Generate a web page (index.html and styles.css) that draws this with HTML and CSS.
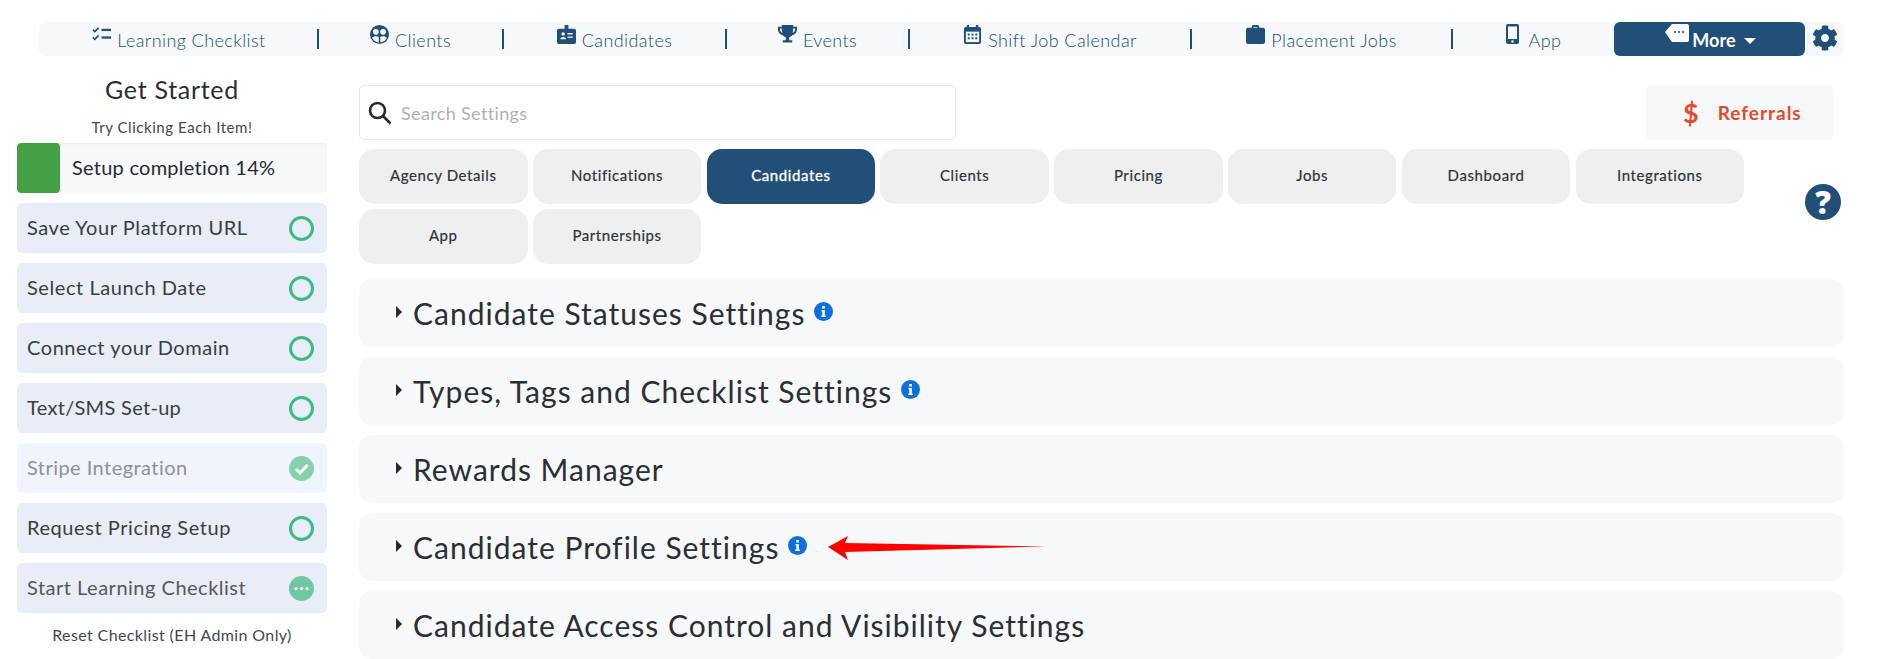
FILE: index.html
```html
<!DOCTYPE html>
<html lang="en">
<head>
<meta charset="utf-8">
<title>Settings</title>
<link rel="stylesheet" href="styles.css">
</head>
<body>
<nav class="topnav">
  <a class="nav-item" style="width:278px"><svg class="nav-icon" viewBox="0 0 20 16"><path class="st" d="M1 3l2 2 4-4M1 11l2 2 4-4"/><rect x="10" y="2" width="10" height="2.4"/><rect x="10" y="10" width="10" height="2.4"/></svg><span>Learning Checklist</span></a>
  <a class="nav-item sep" style="width:185px"><svg class="nav-icon" viewBox="0 0 20 20"><circle cx="10" cy="10" r="10"/><circle class="wh" cx="6.200" cy="7.200" r="3"/><circle class="wh" cx="13.800" cy="7.200" r="3"/><path class="wh" d="M2.200 13.500c1.500-2 5.500-2.400 7-.8v5.800a8.800 8.800 0 0 1-7-5zM10.800 12.700c1.500-1.600 5.500-1.200 7 .8a8.800 8.800 0 0 1-7 5z"/></svg><span>Clients</span></a>
  <a class="nav-item sep" style="width:223px"><svg class="nav-icon" viewBox="0 0 20 20"><path d="M8 0h4v4H18a2 2 0 0 1 2 2v12a2 2 0 0 1-2 2H2a2 2 0 0 1-2-2V6a2 2 0 0 1 2-2h6z"/><circle class="wh" cx="6.500" cy="9.500" r="1.800"/><path class="wh" d="M3.500 15c0-3 6-3 6 0zM11 8.500h5.500V10H11zM11 12h5.500v1.500H11z"/></svg><span>Candidates</span></a>
  <a class="nav-item sep" style="width:183px"><svg class="nav-icon" viewBox="0 0 20 20"><path d="M4 0h12v1.800h4v3c0 3-2.500 5.500-5 6-.8 1-1.800 1.800-3.200 2.200v3H15v2.500H5V16h3.200v-3c-1.400-.4-2.400-1.200-3.200-2.200-2.500-.5-5-3-5-6v-3h4zM2 3.800v1c0 1.500 1.200 3 2.600 3.600C4.200 7 4 5.500 4 3.800zM16 3.800c0 1.700-.2 3.200-.6 4.600C16.800 7.800 18 6.300 18 4.800v-1z"/></svg><span>Events</span></a>
  <a class="nav-item sep" style="width:282px"><svg class="nav-icon" viewBox="0 0 18 20"><path d="M3 0h2.500v2h7V0H15v2h1a2 2 0 0 1 2 2v14a2 2 0 0 1-2 2H2a2 2 0 0 1-2-2V4a2 2 0 0 1 2-2h1z"/><path class="wh" d="M2 7h14v11H2z"/><path d="M4 9h2v2H4zM8 9h2v2H8zM12 9h2v2h-2zM4 13h2v2H4zM8 13h2v2H8zM12 13h2v2h-2z"/></svg><span>Shift Job Calendar</span></a>
  <a class="nav-item sep" style="width:261px"><svg class="nav-icon" viewBox="0 0 20 20"><path d="M6 3V2a2 2 0 0 1 2-2h4a2 2 0 0 1 2 2v1h4a2 2 0 0 1 2 2v13a2 2 0 0 1-2 2H2a2 2 0 0 1-2-2V5a2 2 0 0 1 2-2zm2 0h4V2H8z"/></svg><span>Placement Jobs</span></a>
  <a class="nav-item sep nav-app" style="width:163px"><svg class="nav-icon icon-mobile" viewBox="0 0 13 20"><path d="M2 0h9a2 2 0 0 1 2 2v16a2 2 0 0 1-2 2H2a2 2 0 0 1-2-2V2a2 2 0 0 1 2-2zm0 2.500v12.500h9V2.500z"/><circle class="wh" cx="6.500" cy="17.500" r="1.200"/></svg><span>App</span></a>
  <a class="more"><svg class="more-icon" viewBox="0 0 24 18"><path d="M7 0h15a2 2 0 0 1 2 2v14a2 2 0 0 1-2 2H7L0 8z"/><circle class="dot" cx="10" cy="8" r="1.100"/><circle class="dot" cx="14" cy="8" r="1.100"/><circle class="dot" cx="18" cy="8" r="1.100"/></svg><span>More</span><i class="caret"></i></a>
  <a class="gear"><svg viewBox="0 0 512 512"><path d="M487.400 315.700l-42.600-24.600c4.300-23.200 4.300-47 0-70.200l42.600-24.600c4.900-2.800 7.100-8.600 5.500-14-11.100-35.600-30-67.800-54.700-94.600-3.800-4.100-10-5.100-14.800-2.300L380.800 110c-17.900-15.400-38.500-27.300-60.800-35.100V25.800c0-5.600-3.900-10.500-9.400-11.700-36.700-8.200-74.300-7.800-109.200 0-5.500 1.200-9.400 6.100-9.400 11.700V75c-22.200 7.900-42.800 19.800-60.800 35.100L88.700 85.500c-4.900-2.800-11-1.900-14.800 2.300-24.700 26.700-43.600 58.900-54.700 94.600-1.700 5.400.6 11.200 5.500 14L67.300 221c-4.300 23.200-4.300 47 0 70.200l-42.600 24.600c-4.900 2.800-7.100 8.600-5.500 14 11.100 35.600 30 67.800 54.700 94.600 3.800 4.100 10 5.100 14.800 2.300l42.600-24.600c17.900 15.400 38.500 27.300 60.800 35.100v49.200c0 5.600 3.900 10.500 9.400 11.700 36.700 8.200 74.300 7.800 109.200 0 5.500-1.200 9.400-6.100 9.400-11.700v-49.200c22.200-7.900 42.800-19.800 60.800-35.100l42.600 24.600c4.900 2.800 11 1.900 14.800-2.300 24.700-26.700 43.600-58.900 54.700-94.600 1.500-5.500-.7-11.300-5.600-14.100zM256 336c-44.100 0-80-35.900-80-80s35.900-80 80-80 80 35.900 80 80-35.900 80-80 80z"/></svg></a>
</nav>

<div class="page">
  <aside class="side">
    <h2 class="side-title">Get Started</h2>
    <p class="side-hint">Try Clicking Each Item!</p>
    <div class="progress"><div class="progress-fill" style="width:43px"></div><span>Setup completion 14%</span></div>
    <div class="step"><span>Save Your Platform URL</span><i class="ring"></i></div>
    <div class="step"><span>Select Launch Date</span><i class="ring"></i></div>
    <div class="step"><span>Connect your Domain</span><i class="ring"></i></div>
    <div class="step step-tight"><span>Text/SMS Set-up</span><i class="ring"></i></div>
    <div class="step step-done"><span>Stripe Integration</span><svg class="status" viewBox="0 0 25 25"><circle cx="12.500" cy="12.500" r="12.500" fill="#86d0ad"/><path d="M7 13l4 4 7.500-8" fill="none" stroke="#fff" stroke-width="2.800"/></svg></div>
    <div class="step"><span>Request Pricing Setup</span><i class="ring"></i></div>
    <div class="step step-muted"><span>Start Learning Checklist</span><svg class="status" viewBox="0 0 25 25"><circle cx="12.500" cy="12.500" r="12.500" fill="#72c7a3"/><circle cx="7" cy="12.500" r="1.600" fill="#fff"/><circle cx="12.500" cy="12.500" r="1.600" fill="#fff"/><circle cx="18" cy="12.500" r="1.600" fill="#fff"/></svg></div>
    <p class="reset">Reset Checklist (EH Admin Only)</p>
  </aside>

  <main class="main">
    <div class="top-row">
      <label class="search"><svg class="search-icon" viewBox="0 0 24 24"><circle cx="9.500" cy="9.500" r="7.500"/><path d="M15 15l7.500 7.500"/></svg><span>Search Settings</span></label>
      <a class="referrals"><span class="dollar">$</span><span>Referrals</span></a>
    </div>
    <div class="tab-row">
      <div class="tabs">
        <a class="tab">Agency Details</a>
        <a class="tab">Notifications</a>
        <a class="tab active">Candidates</a>
        <a class="tab">Clients</a>
        <a class="tab">Pricing</a>
        <a class="tab">Jobs</a>
        <a class="tab">Dashboard</a>
        <a class="tab">Integrations</a>
        <a class="tab">App</a>
        <a class="tab">Partnerships</a>
      </div>
      <span class="help">?</span>
    </div>
    <section class="panels">
      <div class="panel"><i class="tri"></i><h3>Candidate Statuses Settings</h3><svg class="info" viewBox="0 0 19 19"><circle cx="9.500" cy="9.500" r="9.500"/><rect class="wh" x="8.200" y="4" width="2.600" height="2.600"/><path class="wh" d="M7.500 8h3.300v5.500h1v1.500H7.300v-1.500h1V9.500h-.8z"/></svg></div>
      <div class="panel"><i class="tri"></i><h3>Types, Tags and Checklist Settings</h3><svg class="info" viewBox="0 0 19 19"><circle cx="9.500" cy="9.500" r="9.500"/><rect class="wh" x="8.200" y="4" width="2.600" height="2.600"/><path class="wh" d="M7.500 8h3.300v5.500h1v1.500H7.300v-1.500h1V9.500h-.8z"/></svg></div>
      <div class="panel"><i class="tri"></i><h3>Rewards Manager</h3></div>
      <div class="panel"><i class="tri"></i><h3>Candidate Profile Settings</h3><svg class="info" viewBox="0 0 19 19"><circle cx="9.500" cy="9.500" r="9.500"/><rect class="wh" x="8.200" y="4" width="2.600" height="2.600"/><path class="wh" d="M7.500 8h3.300v5.500h1v1.500H7.300v-1.500h1V9.500h-.8z"/></svg></div>
      <div class="panel"><i class="tri"></i><h3>Candidate Access Control and Visibility Settings</h3></div>
    </section>
  </main>
</div>
<svg class="arrow" viewBox="0 0 218 25"><path d="M0 12L20 1l-3 7 201 3.500-201 5.500 3 8z" fill="#f00"/></svg>
</body>
</html>
```
FILE: styles.css
```css
* { box-sizing: border-box; }
html, body { margin: 0; padding: 0; }
body {
  font-family: "Lato", "Open Sans", sans-serif;
  color: #2b2e33;
  background: #fff;
  height: 659px;
  overflow: hidden;
  position: relative;
}
h2, h3, p { margin: 0; font-weight: 400; }

.topnav {
  display: flex;
  height: 34px;
  margin: 22px 0 0 39px;
  width: 1805px;
  background: #f6f8fa;
  border-radius: 6px;
}
.nav-item {
  display: flex;
  justify-content: center;
  align-items: flex-start;
  gap: 6px;
  position: relative;
  padding-left: 2px;
  font-size: 18px;
  letter-spacing: .42px;
  color: #234c73;
  font-weight: 300;
  line-height: 34px;
}
.nav-item span { display: block; padding-top: 1px; }
.sep::before {
  content: "";
  position: absolute;
  left: 0;
  top: 7px;
  height: 20px;
  width: 1.500px;
  background: #214f78;
}
.nav-icon { width: 19px; height: 19px; margin-top: 3px; fill: #214f78; flex: none; }
.nav-icon .st { fill: none; stroke: #214f78; stroke-width: 1.800; }
.nav-icon .wh { fill: #f6f8fa; }
.icon-mobile { width: 13px; height: 20px; margin-top: 2px; margin-right: 4px; }
.more {
  display: flex;
  justify-content: center;
  align-items: flex-start;
  gap: 3px;
  width: 191px;
  height: 34px;
  padding-left: 2px;
  background: #214f78;
  border-radius: 6px;
  color: #fff;
  font-size: 18px;
  font-weight: 700;
  letter-spacing: .1px;
  line-height: 34px;
}
.more span { padding-top: 1px; }
.more-icon { width: 24px; height: 18px; margin-top: 2px; fill: #fff; }
.more-icon .dot { fill: #214f78; }
.caret {
  width: 0;
  height: 0;
  margin: 16px 0 0 5px;
  border-left: 6px solid transparent;
  border-right: 6px solid transparent;
  border-top: 6px solid #fff;
}
.gear { width: 26px; height: 26px; margin: 3px 0 0 7px; }
.gear svg { display: block; width: 26px; height: 26px; fill: #214f78; }

.page { display: flex; padding-left: 17px; }
.side { width: 310px; flex: none; }
.side-title {
  margin-top: 17px;
  height: 32px;
  line-height: 32px;
  text-align: center;
  font-size: 25px;
  letter-spacing: .7px;
  color: #2b2e33;
}
.side-hint {
  margin-top: 11px;
  height: 22px;
  line-height: 22px;
  font-size: 15px;
  letter-spacing: .55px;
  text-align: center;
  color: #44474c;
}
.progress {
  position: relative;
  height: 50px;
  margin-top: 5px;
  background: #f6f8fa;
  border-radius: 4px;
  box-shadow: inset 0 1px 2px rgba(0,0,0,.06);
  overflow: hidden;
  display: flex;
  align-items: center;
  padding-bottom: 2px;
  font-size: 20px;
  letter-spacing: .25px;
  color: #26292e;
}
.progress-fill { position: absolute; left: 0; top: 0; bottom: 0; background: #43a047; border-radius: 4px; }
.progress span { padding-left: 55px; }
.step {
  display: flex;
  align-items: center;
  justify-content: space-between;
  height: 50px;
  margin-top: 10px;
  padding: 0 13px 0 10px;
  background: #e8edf7;
  border-radius: 6px;
  font-size: 20px;
  letter-spacing: .57px;
  color: #3a3d42;
}
.step span { padding-bottom: 2px; }
.step-tight { letter-spacing: .3px; }
.step-done { background: #f0f4fc; color: #8e9195; letter-spacing: .45px; }
.step-muted { color: #55585d; letter-spacing: .5px; }
.ring { width: 25px; height: 25px; border: 3px solid #3cb985; border-radius: 50%; flex: none; }
.status { width: 25px; height: 25px; flex: none; }
.reset {
  margin-top: 11px;
  text-align: center;
  font-size: 16px;
  letter-spacing: .38px;
  color: #44474c;
  line-height: 22px;
}

.main { width: 1485px; margin-left: 32px; margin-top: 29px; }
.top-row { display: flex; justify-content: space-between; height: 55px; padding-right: 11px; }
.search {
  display: flex;
  align-items: center;
  width: 597px;
  height: 55px;
  padding-left: 8px;
  border: 1.500px solid #e8e8e8;
  border-radius: 5px;
  font-size: 18px;
  letter-spacing: .35px;
  color: #aeb0b3;
}
.search-icon { width: 24px; height: 24px; margin-right: 9px; fill: none; stroke: #26292e; stroke-width: 2.600; }
.referrals {
  display: flex;
  align-items: center;
  gap: 18px;
  width: 187px;
  height: 55px;
  padding-left: 37px;
  background: #f6f8fa;
  border-radius: 5px;
  color: #e5492a;
  font-size: 19px;
  font-weight: 700;
  letter-spacing: 1px;
}
.dollar { font-size: 27px; font-weight: 700; }
.tab-row { display: flex; justify-content: space-between; margin-top: 9px; }
.tabs { display: flex; flex-wrap: wrap; gap: 5px 5.300px; width: 1400px; }
.tab {
  display: flex;
  align-items: center;
  justify-content: center;
  width: 168.500px;
  height: 55px;
  padding-bottom: 4px;
  background: #efefef;
  border-radius: 15px;
  font-size: 15px;
  font-weight: 400;
  letter-spacing: .6px;
  color: #303338;
  -webkit-text-stroke: .2px #303338;
}
.tab.active { background: #214f78; color: #fff; -webkit-text-stroke: .3px #fff; }
.help {
  width: 36px;
  height: 36px;
  margin: 35px 3px 0 0;
  border-radius: 50%;
  background: #214f78;
  color: #fff;
  font-size: 31px;
  font-weight: 800;
  line-height: 36px;
  text-align: center;
  font-family: "Open Sans", sans-serif;
}
.panels { display: flex; flex-direction: column; gap: 10px; margin-top: 15px; }
.panel {
  display: flex;
  align-items: center;
  height: 68px;
  padding-left: 37px;
  background: #f7f8fa;
  border-radius: 13px;
}
.panel h3 { font-size: 30px; letter-spacing: 1px; color: #2b2e33; line-height: 68px; }
.tri {
  width: 0;
  height: 0;
  margin: -2px 11px 0 0;
  border-top: 6px solid transparent;
  border-bottom: 6px solid transparent;
  border-left: 6px solid #26292e;
}
.info { width: 19px; height: 19px; margin: -4px 0 0 9px; fill: #0f6fdc; }
.info .wh { fill: #fff; }
.arrow { position: absolute; left: 828px; top: 535px; width: 218px; height: 25px; }
```
